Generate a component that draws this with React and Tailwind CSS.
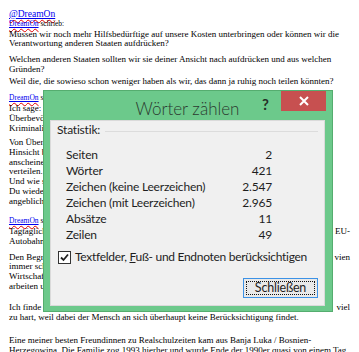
const serif = { fontFamily: '"Liberation Serif", "Times New Roman", serif' };

function Link({ children }) {
  return (
    <span className="text-[#0000ee] underline decoration-[#0000ee]">
      <span className="underline decoration-wavy decoration-[#e00000] underline-offset-2">{children}</span>
    </span>
  );
}

function Statistic({ label, value }) {
  return (
    <div className="flex h-4 items-center whitespace-nowrap">
      <span className="flex-1">{label}</span>
      <span className="w-16 text-right">{value}</span>
    </div>
  );
}

export default function App() {
  return (
    <div className="relative h-[352px] w-[359px] overflow-hidden bg-white">
      {/* page underneath */}
      <div className="px-[9px] pt-[10px] text-[9px] leading-[9.7px] text-black" style={serif}>
        <div className="text-[9.5px]"><Link>@DreamOn</Link></div>
        <div className="text-[7.5px] leading-[8px]"><Link>DreamOn</Link> schrieb:</div>
        <p className="mt-[2px]">Müssen wir noch mehr Hilfsbedürftige auf unsere Kosten unterbringen oder können wir die Verantwortung anderen Staaten aufdrücken?</p>
        <p className="mt-[6px]">Welchen anderen Staaten sollten wir sie deiner Ansicht nach aufdrücken und aus welchen Gründen?</p>
        <p className="mt-[2px]">Weil die, die sowieso schon weniger haben als wir, das dann ja ruhig noch teilen könnten?</p>
        <div className="mt-[8px] text-[7.5px] leading-[8px]"><Link>DreamOn</Link> schrieb:</div>
        <p className="mt-[2px]">Ich sage: Ja<br />Überbevölkerung<br />Kriminalität</p>
        <p className="mt-[5px]">Von Überbevölkerung<br />Hinsicht berechtigt<br />anscheinend nicht<br />verteilen.<br />Und wie sieht es<br />Du wiederholst<br />angeblich</p>
        <div className="mt-[11px] text-[7.5px] leading-[8px]"><Link>DreamOn</Link> schrieb:</div>
        <p className="mt-[2px] flex justify-between"><span>Tagtäglich</span><span>EU-</span></p>
        <p>Autobahn</p>
        <p className="mt-[6px] flex justify-between"><span>Den Begriff</span><span>vien</span></p>
        <p>immer schon</p>
        <p>Wirtschaft</p>
        <p>arbeiten und</p>
        <p className="mt-[12px] flex justify-between"><span>Ich finde</span><span>viel</span></p>
        <p>zu hart, weil dabei der Mensch an sich überhaupt keine Berücksichtigung findet.</p>
        <p className="mt-[13px]">Eine meiner besten Freundinnen zu Realschulzeiten kam aus Banja Luka / Bosnien-<br />Herzegowina. Die Familie zog 1993 hierher und wurde Ende der 1990er quasi von einem Tag</p>
      </div>

      {/* Wörter zählen dialog */}
      <div
        className="absolute left-[43px] top-[90px] flex h-[222px] w-[290px] flex-col border border-[#55ad6f] bg-[#6cc98b] pb-[5px] pl-[6px] pr-[7px]"
        style={{ fontFamily: 'Lato, "Noto Sans", sans-serif' }}
      >
        <div className="relative flex h-[29px] items-center justify-center">
          <span className="mt-[6px] text-[17px] font-light leading-none text-[#2b3a30]">Wörter zählen</span>
          <span className="absolute right-[56px] top-[6px] text-[15px] font-bold leading-none text-[#253028]">?</span>
          <div className="absolute right-[-1px] top-0 flex h-[20px] w-[45px] items-center justify-center bg-[#c75050]">
            <svg width="10" height="10" viewBox="0 0 10 10">
              <path d="M1 1L9 9M9 1L1 9" stroke="#fff" strokeWidth="2" />
            </svg>
          </div>
        </div>
        <div className="flex flex-1 flex-col border border-[#dadada] bg-[#f0f0f0] pl-[6px] pr-[6px] text-[12px] leading-4 tracking-[-0.2px] text-[#1e1e1e]">
          <div className="mt-[1px] flex h-4 items-center gap-[5px]">
            <span>Statistik:</span>
            <div className="mt-[2px] h-px flex-1 bg-[#dcdcdc]" />
          </div>
          <div className="ml-[9px] mr-[46px] mt-[9px] flex flex-col">
            <Statistic label="Seiten" value="2" />
            <Statistic label="Wörter" value="421" />
            <Statistic label="Zeichen (keine Leerzeichen)" value="2.547" />
            <Statistic label="Zeichen (mit Leerzeichen)" value="2.965" />
            <Statistic label="Absätze" value="11" />
            <Statistic label="Zeilen" value="49" />
          </div>
          <div className="ml-[1px] mt-[6px] flex h-4 items-center gap-[4px] whitespace-nowrap">
            <div className="flex h-[13px] w-[13px] shrink-0 items-center justify-center border border-[#333] bg-white">
              <svg width="9" height="9" viewBox="0 0 9 9">
                <path d="M1 4.5L3.5 7L8 1.5" stroke="#222" strokeWidth="1.8" fill="none" />
              </svg>
            </div>
            <span className="text-[12px] tracking-[-0.3px]">Textfelder, <span className="underline">F</span>uß- und Endnoten berücksichtigen</span>
          </div>
          <div className="mt-[13px] flex justify-end">
            <div className="flex h-[20px] w-[75px] items-center justify-center border border-[#3c92e6] bg-[#e9e9e9] p-[2px]">
              <div className="flex h-full w-full items-center justify-center border border-dotted border-[#111] text-[12.5px] leading-none">
                Schließen
              </div>
            </div>
          </div>
        </div>
      </div>
    </div>
  );
}
